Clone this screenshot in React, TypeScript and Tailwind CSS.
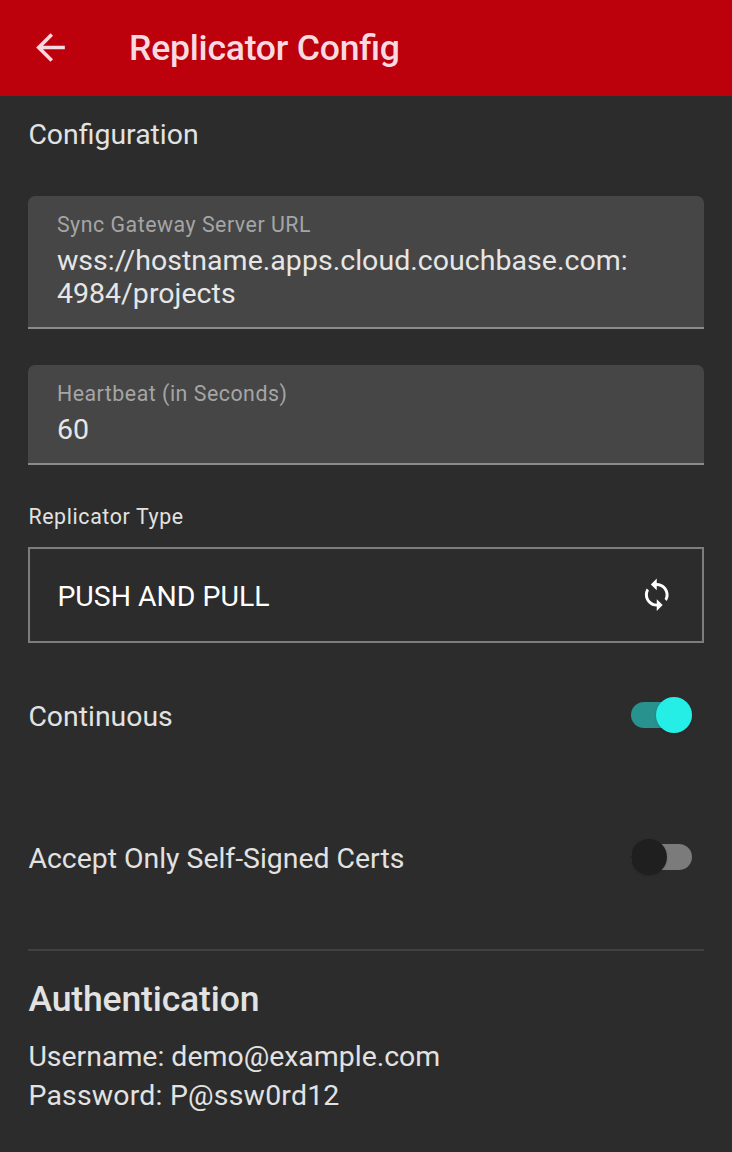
import React from "react";

function Field({ label, children, className }: { label: string; children: React.ReactNode; className: string }) {
  return (
    <div className={`border-b-2 border-[#8a8a8a] ${className}`}>
      <div className="h-full rounded-t-[7px] bg-[#464646] px-[28.5px]">
        <div className="pt-[14px] text-[21.33px] leading-[29px] tracking-[0.52px] text-[#a5a5a5]">{label}</div>
        <div className="mt-[5px] text-[28.5px] leading-[33px] tracking-[0.03px] text-[#e6e6e6]">{children}</div>
      </div>
    </div>
  );
}

function Switch({ on }: { on: boolean }) {
  return (
    <div className={`relative h-[26px] w-[61px] rounded-full ${on ? "bg-[#28928e]" : "bg-[#7b7b7b]"}`} role="switch" aria-checked={on}>
      <span className={`absolute -top-[5px] size-[36px] rounded-full shadow ${on ? "right-0 bg-[#24eee5]" : "left-0 bg-[#1f1f1f]"}`} />
    </div>
  );
}

export default function App() {
  return (
    <main className="flex h-[1152px] w-[732px] flex-col bg-[#2c2c2c] font-['Roboto',sans-serif] text-[#e2e2e2]">
      <header className="flex h-[96px] shrink-0 items-center bg-[#bc000c] text-[#f7dbe0]">
        <svg className="mb-[1px] ml-[29px] size-[43px]" viewBox="0 0 24 24" fill="currentColor">
          <path d="M20 11H7.83l5.59-5.59L12 4l-8 8 8 8 1.41-1.41L7.83 13H20v-2z" />
        </svg>
        <h1 className="ml-[57px] text-[35.6px] leading-[42px] font-medium tracking-[-0.24px] [font-feature-settings:'liga'_1]">Replicator Config</h1>
      </header>
      <section className="flex flex-col px-[28.4px]">
        <h2 className="mt-[20px] text-[28.4px] leading-[38px]">Configuration</h2>
        <Field label="Sync Gateway Server URL" className="mt-[42px] h-[133px]">wss://hostname.apps.cloud.couchbase.com:<br />4984/projects</Field>
        <Field label="Heartbeat (in Seconds)" className="mt-[36px] h-[100px]">60</Field>
        <div className="mt-[37px] text-[21.33px] leading-[29px] tracking-[0.63px]">Replicator Type</div>
        <button className="mt-[16px] flex h-[96px] items-center justify-between border-2 border-[#7d7d7d] pr-[27px] pl-[27px] text-[28.45px] text-white">
          <span className="pt-[5px]">PUSH AND PULL</span>
          <svg className="size-[35.5px]" viewBox="0 0 24 24" fill="currentColor">
            <path d="M12 4V1L8 5l4 4V6c3.31 0 6 2.69 6 6 0 1.01-.25 1.97-.7 2.8l1.46 1.46C19.54 15.03 20 13.57 20 12c0-4.42-3.58-8-8-8zm0 14c-3.31 0-6-2.69-6-6 0-1.01.25-1.97.7-2.8L5.24 7.74C4.46 8.97 4 10.43 4 12c0 4.42 3.58 8 8 8v3l4-4-4-4v3z" />
          </svg>
        </button>
        <div className="mt-[53px] flex h-[38px] items-center justify-between pr-[12px] text-[28.4px]"><span className="pt-[5px]">Continuous</span><Switch on /></div>
        <div className="mt-[104px] flex h-[38px] items-center justify-between pr-[12px] text-[28.4px]"><span className="pt-[5px]">Accept Only Self-Signed Certs</span><Switch on={false} /></div>
        <hr className="mt-[73px] border-t-2 border-[#414141]" />
        <h2 className="mt-[27px] text-[35.6px] leading-[43px] font-medium tracking-[-0.16px]">Authentication</h2>
        <div className="mt-[17px] text-[28.45px] leading-[38.5px]"><p>Username: demo@example.com</p><p className="tracking-[0.2px]">Password: P@ssw0rd12</p></div>
      </section>
    </main>
  );
}
